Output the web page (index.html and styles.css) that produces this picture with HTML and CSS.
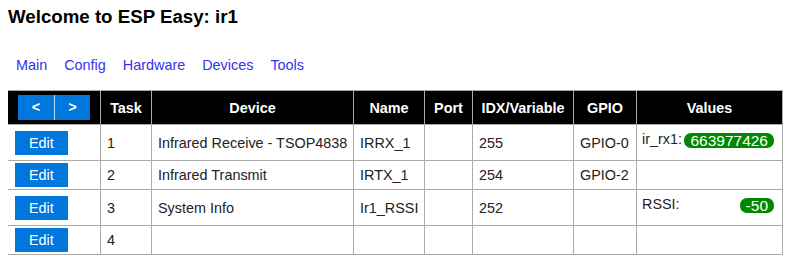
FILE: index.html
```html
<!DOCTYPE html>
<html lang="en">
<head>
  <meta charset="UTF-8">
  <meta name="viewport" content="width=device-width, initial-scale=1.0">
  <title>ESP Easy: ir1</title>
  <link rel="stylesheet" href="styles.css">
</head>
<body>
  <h1 class="title">Welcome to ESP Easy: ir1</h1>

  <nav class="menu">
    <a class="menu-link" href="#">Main</a>
    <a class="menu-link" href="#">Config</a>
    <a class="menu-link" href="#">Hardware</a>
    <a class="menu-link" href="#">Devices</a>
    <a class="menu-link" href="#">Tools</a>
  </nav>

  <!-- task list -->
  <table class="task-table">
    <colgroup>
      <col class="col-edit">
      <col class="col-task">
      <col class="col-device">
      <col class="col-name">
      <col class="col-port">
      <col class="col-idx">
      <col class="col-gpio">
      <col class="col-values">
    </colgroup>
    <tr>
      <th>
        <div class="pager">
          <a class="pager-btn" href="#">&lt;</a><a class="pager-btn pager-next" href="#">&gt;</a>
        </div>
      </th>
      <th>Task</th>
      <th>Device</th>
      <th>Name</th>
      <th>Port</th>
      <th>IDX/Variable</th>
      <th>GPIO</th>
      <th>Values</th>
    </tr>
    <tr>
      <td><a class="edit-btn" href="#">Edit</a></td>
      <td>1</td>
      <td>Infrared Receive - TSOP4838</td>
      <td>IRRX_1</td>
      <td></td>
      <td>255</td>
      <td>GPIO-0</td>
      <td class="values">
        <div class="div_l">ir_rx1:</div>
        <div class="div_r">663977426</div>
        <div class="div_br"></div>
      </td>
    </tr>
    <tr>
      <td><a class="edit-btn" href="#">Edit</a></td>
      <td>2</td>
      <td>Infrared Transmit</td>
      <td>IRTX_1</td>
      <td></td>
      <td>254</td>
      <td>GPIO-2</td>
      <td class="values"></td>
    </tr>
    <tr>
      <td><a class="edit-btn" href="#">Edit</a></td>
      <td>3</td>
      <td>System Info</td>
      <td>Ir1_RSSI</td>
      <td></td>
      <td>252</td>
      <td></td>
      <td class="values">
        <div class="div_l">RSSI:</div>
        <div class="div_r">-50</div>
        <div class="div_br"></div>
      </td>
    </tr>
    <tr>
      <td><a class="edit-btn" href="#">Edit</a></td>
      <td>4</td>
      <td></td>
      <td></td>
      <td></td>
      <td></td>
      <td></td>
      <td class="values"></td>
    </tr>
  </table>
</body>
</html>
```

FILE: styles.css
```css
body {
  font-family: 'Liberation Sans', Arial, sans-serif;
  font-size: 14.4px;
  margin: 6px 8px;
  color: #222;
  background-color: #fff;
}
.title {
  font-size: 18.7px;
  font-weight: bold;
  color: #000;
  margin: 0;
}
.menu {
  display: flex;
  gap: 17px;
  padding-left: 8px;
  margin-top: 29px;
}
.menu-link {
  color: #3333ee;
  text-decoration: none;
}
.task-table {
  border-collapse: collapse;
  table-layout: fixed;
  width: 775px;
  margin-top: 17px;
  margin-left: -1px;
}
.col-edit { width: 93px; }
.col-task { width: 51px; }
.col-device { width: 202px; }
.col-name { width: 71px; }
.col-port { width: 48px; }
.col-idx { width: 101px; }
.col-gpio { width: 63px; }
.col-values { width: 146px; }
.task-table th,
.task-table td {
  border: 1px solid #aaa;
}
.task-table th {
  background-color: #000;
  color: #fff;
  padding: 4px 6px;
  font-weight: bold;
}
.task-table td {
  padding: 6px;
  line-height: 16px;
  white-space: nowrap;
}
.task-table td.values {
  padding: 6px 5px;
}
.pager {
  display: flex;
  justify-content: center;
}
.pager-btn {
  display: block;
  width: 36px;
  height: 25px;
  line-height: 25px;
  background-color: #0077dd;
  color: #fff;
  text-decoration: none;
  text-align: center;
}
.pager-next {
  width: 35px;
  border-left: 1px solid #b8d8f4;
}
.edit-btn {
  padding: 4px 14px;
  margin-left: 1px;
  background-color: #0077dd;
  color: #fff;
  text-decoration: none;
}
.div_l {
  float: left;
}
.div_r {
  float: right;
  margin: 2px 3px 6px 0;
  padding: 0 6px;
  font-size: 15.5px;
  line-height: 15px;
  border-radius: 7px;
  background-color: #008800;
  color: #fff;
}
.div_br {
  clear: both;
}
```
